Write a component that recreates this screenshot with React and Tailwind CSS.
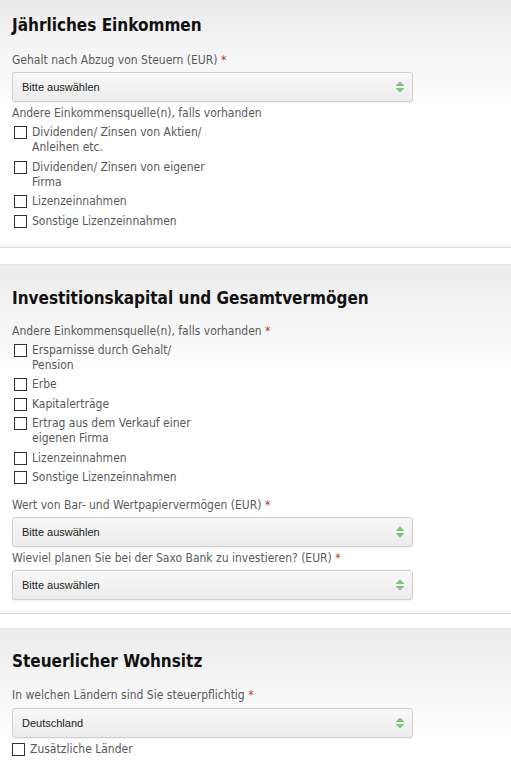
import React from "react";

const labelFont = { fontFamily: '"DejaVu Sans Condensed", "DejaVu Sans", sans-serif' };

function Arrows() {
  return (
    <svg width="10" height="12" viewBox="0 0 10 12" className="shrink-0">
      <polygon points="5,0.5 9.5,5 0.5,5" fill="#7bc47b" />
      <polygon points="0.5,7 9.5,7 5,11.5" fill="#7bc47b" />
    </svg>
  );
}

function Select({ value }) {
  return (
    <div className="w-[401px] h-[30px] rounded-[3px] border border-[#cfcfcf] bg-[linear-gradient(to_bottom,#f8f8f8,#ececec)] shadow-[0_1px_1px_rgba(0,0,0,0.06)] flex items-center justify-between pl-[9px] pr-[7px]">
      <span className="text-[11px] text-[#222]" style={{ fontFamily: '"Liberation Sans", Arial, sans-serif' }}>{value}</span>
      <Arrows />
    </div>
  );
}

function Label({ children, req }) {
  return (
    <div className="text-[12px] leading-[16px] text-[#5a5a5a]" style={labelFont}>
      {children}
      {req && <span className="text-[#c0392b]"> *</span>}
    </div>
  );
}

function Check({ lines, boxLeft = "ml-[2px]" }) {
  return (
    <div className="flex items-start">
      <div className={`${boxLeft} mt-[1px] w-[13px] h-[13px] border border-[#333] bg-white shrink-0`} />
      <div className="ml-[5px] text-[12px] leading-[15px] text-[#5a5a5a]" style={labelFont}>
        {lines.map((l, i) => (
          <div key={i}>{l}</div>
        ))}
      </div>
    </div>
  );
}

function Title({ children }) {
  return (
    <h2 className="text-[17px] leading-[24px] font-bold text-[#111]" style={labelFont}>
      {children}
    </h2>
  );
}

const sectionCls =
  "px-[12px] bg-[linear-gradient(to_bottom,#ebebeb,#ffffff_110px)] border-b border-[#dedede] shadow-[inset_0_-4px_4px_-3px_rgba(0,0,0,0.07)]";

export default function App() {
  return (
    <div className="w-[511px] h-[762px] overflow-hidden bg-white">
      {/* Section 1 */}
      <div className={`${sectionCls} pt-[13px] pb-[18px]`}>
        <Title>Jährliches Einkommen</Title>
        <div className="mt-[15px]">
          <Label req>Gehalt nach Abzug von Steuern (EUR)</Label>
        </div>
        <div className="mt-[4px]">
          <Select value="Bitte auswählen" />
        </div>
        <div className="mt-[3px]">
          <Label>Andere Einkommensquelle(n), falls vorhanden</Label>
        </div>
        <div className="mt-[4px] flex flex-col gap-[4.5px]">
          <Check lines={["Dividenden/ Zinsen von Aktien/", "Anleihen etc."]} />
          <Check lines={["Dividenden/ Zinsen von eigener", "Firma"]} />
          <Check lines={["Lizenzeinnahmen"]} />
          <Check lines={["Sonstige Lizenzeinnahmen"]} />
        </div>
      </div>

      <div className="h-[16px]" />

      {/* Section 2 */}
      <div className={`${sectionCls} border-t border-t-[#e6e6e6] pt-[21px] pb-[13px]`}>
        <Title>Investitionskapital und Gesamtvermögen</Title>
        <div className="mt-[13px]">
          <Label req>Andere Einkommensquelle(n), falls vorhanden</Label>
        </div>
        <div className="mt-[4px] flex flex-col gap-[4.5px]">
          <Check lines={["Ersparnisse durch Gehalt/", "Pension"]} />
          <Check lines={["Erbe"]} />
          <Check lines={["Kapitalerträge"]} />
          <Check lines={["Ertrag aus dem Verkauf einer", "eigenen Firma"]} />
          <Check lines={["Lizenzeinnahmen"]} />
          <Check lines={["Sonstige Lizenzeinnahmen"]} />
        </div>
        <div className="mt-[12px]">
          <Label req>Wert von Bar- und Wertpapiervermögen (EUR)</Label>
        </div>
        <div className="mt-[4px]">
          <Select value="Bitte auswählen" />
        </div>
        <div className="mt-[3px]">
          <Label req>Wieviel planen Sie bei der Saxo Bank zu investieren? (EUR)</Label>
        </div>
        <div className="mt-[4px]">
          <Select value="Bitte auswählen" />
        </div>
      </div>

      <div className="h-[14px]" />

      {/* Section 3 */}
      <div className={`${sectionCls} border-t border-t-[#e6e6e6] pt-[20px] pb-[20px]`}>
        <Title>Steuerlicher Wohnsitz</Title>
        <div className="mt-[14px]">
          <Label req>In welchen Ländern sind Sie steuerpflichtig</Label>
        </div>
        <div className="mt-[5px]">
          <Select value="Deutschland" />
        </div>
        <div className="mt-[4px]">
          <Check lines={["Zusätzliche Länder"]} boxLeft="ml-0" />
        </div>
      </div>
    </div>
  );
}
